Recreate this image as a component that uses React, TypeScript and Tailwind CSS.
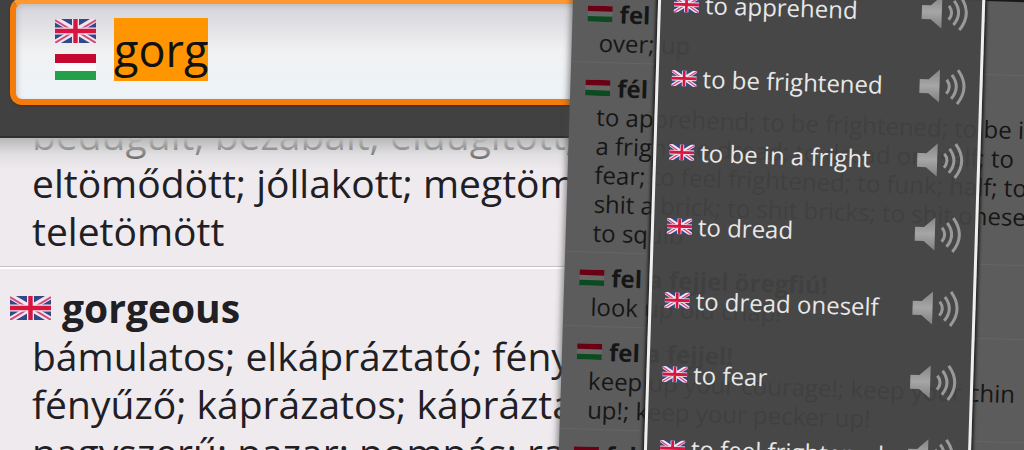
import React from "react";

function UnionJack({ className }: { className: string }) {
  return (
    <svg viewBox="0 0 41 24" preserveAspectRatio="none" className={className} role="img" aria-label="English">
      <rect width="41" height="24" fill="#2f4a86" />
      <path d="M0 0L41 24M41 0L0 24" stroke="#f3e6ef" strokeWidth="6" />
      <path d="M0 1L18 12M41 1L23 12M0 24L18 13M41 24L23 13" stroke="#d8487a" strokeWidth="2" />
      <path d="M20.5 0V24M0 12H41" stroke="#f3e6ef" strokeWidth="7" />
      <path d="M20.5 0V24M0 12H41" stroke="#d8153f" strokeWidth="4.4" />
    </svg>
  );
}

function HungaryFlag({ className, dim = false }: { className: string; dim?: boolean }) {
  return (
    <svg viewBox="0 0 41 26" preserveAspectRatio="none" className={className} role="img" aria-label="Magyar">
      <rect width="41" height="26" fill={dim ? "#686868" : "#fbfbfb"} />
      <rect width="41" height="9" fill={dim ? "#6a0014" : "#c4082f"} />
      <rect y="17" width="41" height="9" fill={dim ? "#0c4a20" : "#25a04a"} />
    </svg>
  );
}

function Speaker() {
  return (
    <svg viewBox="0 0 48 36" className="h-9 w-12" aria-hidden="true">
      <defs>
        <linearGradient id="metal" x1="0" y1="0" x2="0" y2="1">
          <stop offset="0" stopColor="#858585" />
          <stop offset="0.5" stopColor="#a6a6a6" />
          <stop offset="1" stopColor="#808080" />
        </linearGradient>
      </defs>
      <path d="M1 11H10L21 1V34L10 25H1Z" fill="url(#metal)" />
      <g fill="none" stroke="#999999" strokeWidth="3">
        <path d="M28 11Q33.500 18 28 25" />
        <path d="M33 6Q42.500 18 33 30" />
        <path d="M39 1Q52 18 39 35" />
      </g>
    </svg>
  );
}

const words = [
  { head: "fel", lines: ["over; up"] },
  {
    head: "fél",
    lines: [
      "to apprehend; to be frightened; to be in",
      "a fright; to dread; to dread oneself; to",
      "fear; to feel frightened; to funk; half; to",
      "shit a brick; to shit bricks; to shit oneself;",
      "to squib",
    ],
  },
  { head: "fel a fejjel öregfiú!", lines: ["look up old chap!"] },
  { head: "fel a fejjel!", lines: ["keep up your courage!; keep your chin", "up!; keep your pecker up!"] },
  { head: "fel a kezekkel!", lines: ["hands up!"] },
];

const choices = [
  "to apprehend",
  "to be frightened",
  "to be in a fright",
  "to dread",
  "to dread oneself",
  "to fear",
  "to feel frightened",
];

function SearchBar() {
  return (
    <header className="border-b-2 border-[#303030] bg-[#414141] pb-[31px] pl-[10px]">
      <label className="-mt-[2px] flex h-[107px] items-center gap-[18px] rounded-l-xl border-[6px] border-r-0 border-[#f57c0c] border-t-[#ff9830] bg-linear-to-b from-[#d4d3da] via-[#f1f1f2] to-[#edf3f8] pb-1 pl-[39px] shadow-[inset_2px_2px_4px_#aaaaaa80,0_1px_2px_#5a2a00]">
        <span className="flex flex-col gap-[11px]">
          <UnionJack className="h-6 w-[41px]" />
          <HungaryFlag className="h-[26px] w-[41px]" />
        </span>
        <input
          aria-label="Search"
          defaultValue="gorg"
          className="field-sizing-content h-[63px] bg-[#ff9500] text-[45px] leading-[63px] text-[#111111] outline-none"
        />
      </label>
    </header>
  );
}

function Results() {
  return (
    <main className="relative overflow-hidden text-[39px] leading-[48px] whitespace-nowrap text-[#202024]">
      <div className="-mt-[27px] border-b border-[#c4c2c5] pb-[11px] pl-8">
        <p>bedugult; bezabált; eldugított;</p>
        <p>eltömődött; jóllakott; megtömött;</p>
        <p>teletömött</p>
      </div>
      <div className="border-t-2 border-white pt-[15px] pl-8">
        <h2 className="-ml-[22px] flex items-center gap-[11px] font-bold">
          <UnionJack className="h-6 w-[41px]" />
          gorgeous
        </h2>
        <p>bámulatos; elkápráztató; fényes;</p>
        <p>fényűző; káprázatos; kápráztató;</p>
        <p>nagyszerű; pazar; pompás; ragyogó;</p>
      </div>
      <div className="absolute inset-x-0 top-0 h-8 bg-linear-to-b from-[#b8b8b8] via-[#d6d5d6]/55 to-[#eeeaee]/10" />
    </main>
  );
}

function WordList() {
  return (
    <ul className="border-t-[50px] border-[#181818] text-2xl leading-[29px] whitespace-nowrap text-[#161616]">
      {words.map((w) => (
        <li key={w.head} className="border-b border-[#656565] pt-[10px] pb-[5px] pl-[27px]">
          <h3 className="-ml-3 flex items-center gap-[7px] font-bold">
            <HungaryFlag dim className="h-4 w-[25px]" />
            {w.head}
          </h3>
          {w.lines.map((l) => (
            <p key={l}>{l}</p>
          ))}
        </li>
      ))}
    </ul>
  );
}

function Translations() {
  return (
    <div
      role="dialog"
      aria-label="Translations"
      className="absolute top-0 -bottom-10 left-[85px] w-[327px] overflow-hidden border-x-[3px] border-[#efefef] bg-[#454545]/90 pt-[26px] shadow-[0_0_3px_2px_#222222]"
    >
      <ul className="text-2xl text-[#e8e8e8]">
        {choices.map((c) => (
          <li key={c} className="flex h-[74px] items-center pr-[13px] pl-[13px]">
            <UnionJack className="h-4 w-[25px]" />
            <span className="grow pl-[6px] whitespace-nowrap">{c}</span>
            <button type="button" aria-label={`Play ${c}`}>
              <Speaker />
            </button>
          </li>
        ))}
      </ul>
    </div>
  );
}

export default function App() {
  return (
    <div className="relative h-screen overflow-hidden bg-[#eeeaee] font-['Open_Sans','Noto_Sans',sans-serif]">
      <SearchBar />
      <Results />
      <aside className="absolute -top-[62px] -right-10 -bottom-10 left-[calc(56%+2px)] origin-top-left rotate-[1.8deg] bg-[#5c5c5c] shadow-[0_0_6px_2px_#44444499]">
        <div className="h-full overflow-hidden">
          <WordList />
        </div>
        <Translations />
      </aside>
    </div>
  );
}
